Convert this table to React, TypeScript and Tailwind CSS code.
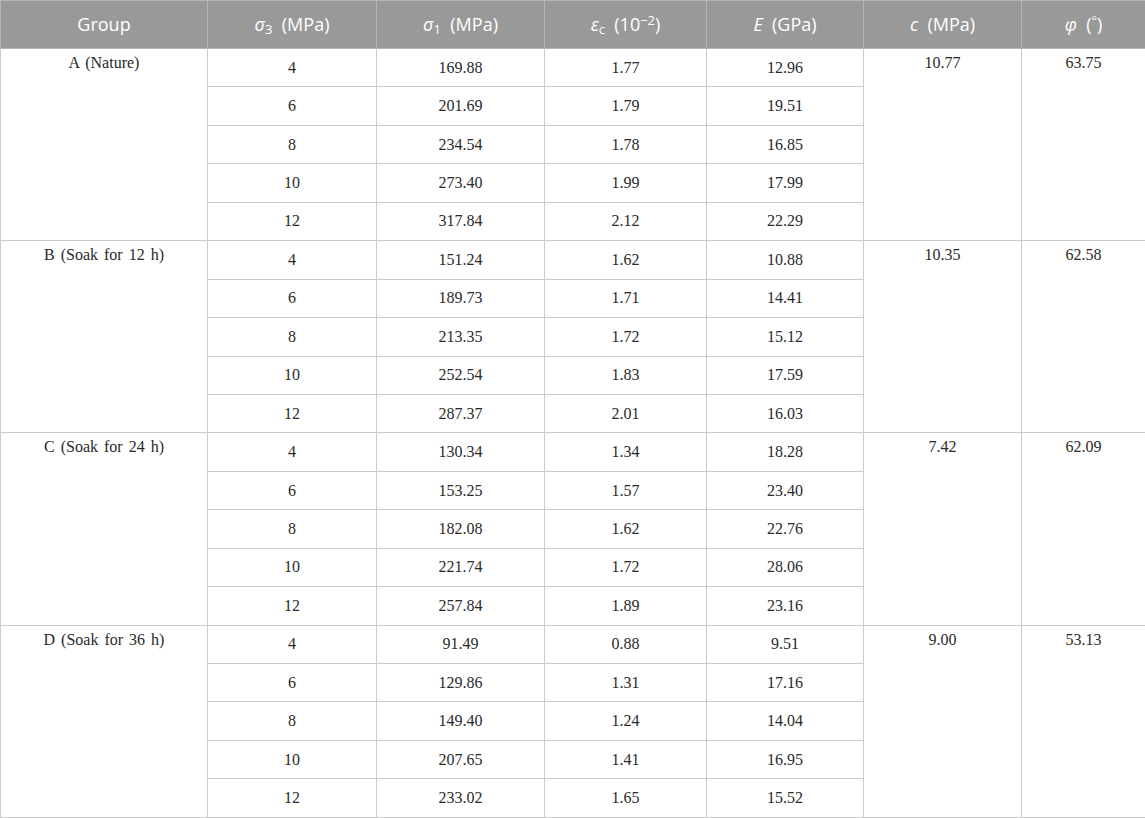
const GROUPS = [
  {
    name: 'A (Nature)',
    c: '10.77',
    phi: '63.75',
    rows: [
      ['4', '169.88', '1.77', '12.96'],
      ['6', '201.69', '1.79', '19.51'],
      ['8', '234.54', '1.78', '16.85'],
      ['10', '273.40', '1.99', '17.99'],
      ['12', '317.84', '2.12', '22.29'],
    ],
  },
  {
    name: 'B (Soak for 12 h)',
    c: '10.35',
    phi: '62.58',
    rows: [
      ['4', '151.24', '1.62', '10.88'],
      ['6', '189.73', '1.71', '14.41'],
      ['8', '213.35', '1.72', '15.12'],
      ['10', '252.54', '1.83', '17.59'],
      ['12', '287.37', '2.01', '16.03'],
    ],
  },
  {
    name: 'C (Soak for 24 h)',
    c: '7.42',
    phi: '62.09',
    rows: [
      ['4', '130.34', '1.34', '18.28'],
      ['6', '153.25', '1.57', '23.40'],
      ['8', '182.08', '1.62', '22.76'],
      ['10', '221.74', '1.72', '28.06'],
      ['12', '257.84', '1.89', '23.16'],
    ],
  },
  {
    name: 'D (Soak for 36 h)',
    c: '9.00',
    phi: '53.13',
    rows: [
      ['4', '91.49', '0.88', '9.51'],
      ['6', '129.86', '1.31', '17.16'],
      ['8', '149.40', '1.24', '14.04'],
      ['10', '207.65', '1.41', '16.95'],
      ['12', '233.02', '1.65', '15.52'],
    ],
  },
];

const th = 'border border-[#b5b5b5] font-normal text-center align-middle px-2';
const td = 'border border-[#cbcbcb] text-center align-middle px-2';
const tdSpan = 'border border-[#cbcbcb] text-center align-top pt-[2px] px-2';

export default function App() {
  return (
    <div className="w-[1145px] h-[818px] bg-white overflow-hidden">
      <table className="w-[1145px] table-fixed border-collapse border border-[#cbcbcb]">
        <colgroup>
          <col className="w-[207px]" />
          <col className="w-[169px]" />
          <col className="w-[168px]" />
          <col className="w-[162px]" />
          <col className="w-[157px]" />
          <col className="w-[158px]" />
          <col className="w-[124px]" />
        </colgroup>
        <thead>
          <tr className="h-[48px] bg-[#999999] text-white text-[18px] font-['Open_Sans',sans-serif]">
            <th className={th}>Group</th>
            <th className={th}>
              <i>σ</i>
              <sub className="text-[13px]">3</sub>&nbsp; (MPa)
            </th>
            <th className={th}>
              <i>σ</i>
              <sub className="text-[13px]">1</sub>&nbsp; (MPa)
            </th>
            <th className={th}>
              <i>ε</i>
              <sub className="text-[13px]">c</sub>&nbsp; (10
              <sup className="text-[13px]">−2</sup>)
            </th>
            <th className={th}>
              <i>E</i>&nbsp; (GPa)
            </th>
            <th className={th}>
              <i>c</i>&nbsp; (MPa)
            </th>
            <th className={th}>
              <i>φ</i>&nbsp; (<sup className="text-[13px]">°</sup>)
            </th>
          </tr>
        </thead>
        <tbody className="text-[16px] text-[#2a2a2a] font-['Liberation_Serif',serif] [word-spacing:2px]">
          {GROUPS.map((g) =>
            g.rows.map((r, i) => (
              <tr key={g.name + i} className="h-[38.45px]">
                {i === 0 && (
                  <td rowSpan={5} className={tdSpan}>
                    {g.name}
                  </td>
                )}
                {r.map((v, j) => (
                  <td key={j} className={td}>
                    {v}
                  </td>
                ))}
                {i === 0 && (
                  <>
                    <td rowSpan={5} className={tdSpan}>
                      {g.c}
                    </td>
                    <td rowSpan={5} className={tdSpan}>
                      {g.phi}
                    </td>
                  </>
                )}
              </tr>
            ))
          )}
        </tbody>
      </table>
    </div>
  );
}
